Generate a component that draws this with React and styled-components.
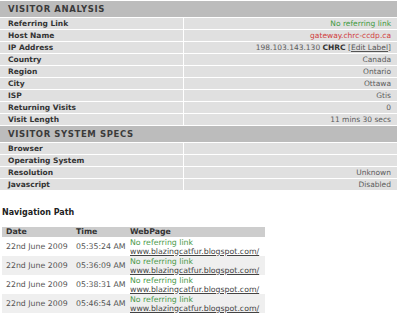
import styled, { createGlobalStyle } from 'styled-components';

const GlobalStyle = createGlobalStyle`
  body {
    margin: 0;
    padding-top: 1px;
    background: #fff;
    font-family: "DejaVu Sans", Verdana, sans-serif;
    color: #333;
  }
`;

const analysis = [
  { label: 'Referring Link', value: 'No referring link', tone: 'green' },
  { label: 'Host Name', value: 'gateway.chrc-ccdp.ca', tone: 'red' },
  { label: 'IP Address', ip: true },
  { label: 'Country', value: 'Canada' },
  { label: 'Region', value: 'Ontario' },
  { label: 'City', value: 'Ottawa' },
  { label: 'ISP', value: 'Gtis' },
  { label: 'Returning Visits', value: '0' },
  { label: 'Visit Length', value: '11 mins 30 secs' },
];

const specs = [
  { label: 'Browser', value: '' },
  { label: 'Operating System', value: '' },
  { label: 'Resolution', value: 'Unknown' },
  { label: 'Javascript', value: 'Disabled' },
];

const visits = [
  { date: '22nd June 2009', time: '05:35:24 AM' },
  { date: '22nd June 2009', time: '05:36:09 AM' },
  { date: '22nd June 2009', time: '05:38:31 AM' },
  { date: '22nd June 2009', time: '05:46:54 AM' },
];

const toneColor = {
  green: '#3f9a3f',
  red: '#d03c3c',
};

const StatsTable = styled.table`
  width: 397px;
  border-collapse: collapse;
  font-size: 7.5px;
`;

const SectionHead = styled.th`
  height: 16px;
  padding: 0 0 0 8px;
  background: #bcbcbc;
  border-bottom: 1px solid #fff;
  text-align: left;
  font-size: 8.5px;
  font-weight: bold;
  letter-spacing: 0.6px;
  color: #3b3b3b;
`;

const Label = styled.td`
  width: 175px;
  height: 11px;
  padding: 0 0 0 8px;
  background: #e0e0e0;
  border-bottom: 1px solid #fff;
  border-right: 1px solid #fff;
  font-weight: bold;
  color: #333;
  line-height: 11px;
  white-space: nowrap;
`;

const Value = styled.td`
  height: 11px;
  padding: 0 6px 0 0;
  background: #e0e0e0;
  border-bottom: 1px solid #fff;
  text-align: right;
  color: ${(p) => toneColor[p.$tone] || '#5c5c5c'};
  line-height: 11px;
  white-space: nowrap;
`;

const Strong = styled.b`
  color: #333;
`;

const EditLink = styled.a`
  color: #555;
  text-decoration: underline;
`;

const NavTitle = styled.h3`
  margin: 16px 0 0 2px;
  font-size: 8px;
  font-weight: bold;
  color: #222;
  line-height: 12px;
`;

const NavTable = styled.table`
  margin: 8px 0 0 2px;
  width: 263px;
  border-collapse: collapse;
  table-layout: fixed;
  font-size: 7.8px;
`;

const NavCol = styled.col`
  width: ${(p) => (p.$w ? `${p.$w}px` : 'auto')};
`;

const NavHead = styled.th`
  height: 10px;
  padding: 0 0 0 ${(p) => p.$pad || 4}px;
  background: #cdcdcd;
  text-align: left;
  font-weight: bold;
  color: #333;
  line-height: 10px;
`;

const NavRow = styled.tr`
  background: ${(p) => (p.$alt ? '#efefef' : '#fff')};
`;

const NavCell = styled.td`
  height: 19px;
  padding: 0 0 0 ${(p) => p.$pad || 4}px;
  color: #555;
  line-height: 9px;
  white-space: nowrap;
  overflow: hidden;
  vertical-align: middle;
`;

const Referrer = styled.div`
  color: #4a9a4a;
`;

const PageUrl = styled.a`
  display: block;
  color: #444;
  text-decoration: underline;
`;

const StatsSection = ({ title, rows }) => (
  <>
    <tr>
      <SectionHead colSpan={2}>{title}</SectionHead>
    </tr>
    {rows.map((r) => (
      <tr key={r.label}>
        <Label>{r.label}</Label>
        <Value $tone={r.tone}>
          {r.ip ? (
            <>
              198.103.143.130 <Strong>CHRC</Strong> [<EditLink>Edit Label</EditLink>]
            </>
          ) : (
            r.value
          )}
        </Value>
      </tr>
    ))}
  </>
);

export default function App() {
  return (
    <>
      <GlobalStyle />
      <StatsTable>
        <tbody>
          <StatsSection title="VISITOR ANALYSIS" rows={analysis} />
          <StatsSection title="VISITOR SYSTEM SPECS" rows={specs} />
        </tbody>
      </StatsTable>

      <NavTitle>Navigation Path</NavTitle>
      <NavTable>
        <colgroup>
          <NavCol $w={70} />
          <NavCol $w={55} />
          <NavCol />
        </colgroup>
        <thead>
          <tr>
            <NavHead>Date</NavHead>
            <NavHead>Time</NavHead>
            <NavHead $pad={3}>WebPage</NavHead>
          </tr>
        </thead>
        <tbody>
          {visits.map((v, i) => (
            <NavRow key={v.time} $alt={i % 2 === 1}>
              <NavCell>{v.date}</NavCell>
              <NavCell>{v.time}</NavCell>
              <NavCell $pad={3}>
                <Referrer>No referring link</Referrer>
                <PageUrl>www.blazingcatfur.blogspot.com/</PageUrl>
              </NavCell>
            </NavRow>
          ))}
        </tbody>
      </NavTable>
    </>
  );
}
